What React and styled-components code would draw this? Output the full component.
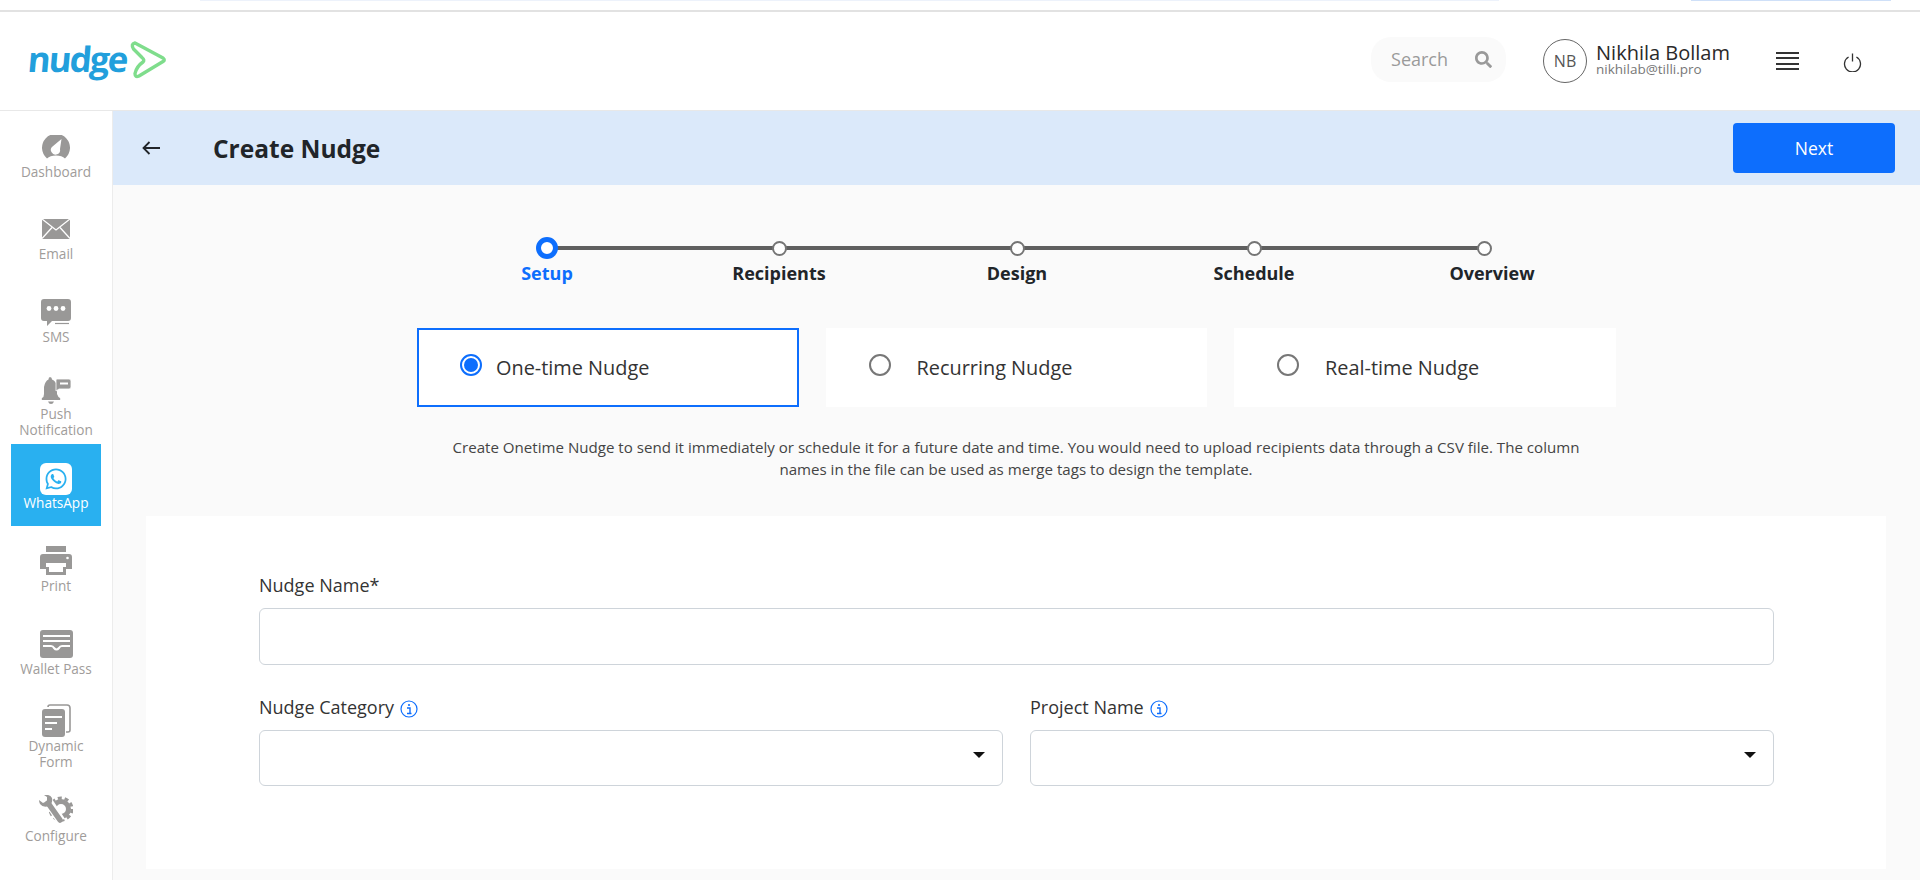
import React from 'react';
import styled, { createGlobalStyle } from 'styled-components';
import { FaSearch, FaWhatsapp } from 'react-icons/fa';

const GlobalStyle = createGlobalStyle`
    html, body {
        margin: 0;
        padding: 0;
        background: #fff;
        font-family: "Open Sans", "Noto Sans", sans-serif;
        overflow: hidden;
    }
    * {
        box-sizing: border-box;
    }
`;

const Page = styled.div`
    width: 1920px;
    height: 880px;
    overflow: hidden;
    display: flex;
    flex-direction: column;
`;

const TopStrip = styled.div`
    height: 12px;
    flex: none;
    display: flex;
    align-items: flex-start;
    padding-left: 200px;
    border-bottom: 2px solid #e2e2e2;
`;

const StripBar = styled.div`
    height: 1px;
    width: ${(p) => p.$width}px;
    margin-right: ${(p) => p.$gap || 0}px;
    background: ${(p) => p.$color};
`;

const Header = styled.header`
    height: 99px;
    flex: none;
    display: flex;
    align-items: center;
    padding-left: 28px;
    border-bottom: 1px solid #e8e8e8;
`;

const Logo = styled.div`
    display: flex;
    align-items: center;
    margin-top: -2px;
`;

const LogoText = styled.span`
    display: inline-block;
    font-family: "Open Sans", sans-serif;
    font-size: 35px;
    font-weight: 700;
    line-height: 1;
    letter-spacing: -2px;
    color: #229fdc;
    transform: skewX(-5deg);
    margin: -4px 2px 0 0;
`;

const SearchPill = styled.div`
    width: 135px;
    height: 45px;
    margin-left: auto;
    margin-top: -4px;
    border-radius: 20px;
    background: #fafafa;
    display: flex;
    align-items: center;
    justify-content: space-between;
    padding: 0 14px 0 20px;
    font-size: 18px;
    color: #9a9a9a;
`;

const Avatar = styled.div`
    width: 44px;
    height: 44px;
    margin-left: 37px;
    border: 1px solid #666;
    border-radius: 50%;
    display: flex;
    align-items: center;
    justify-content: center;
    font-size: 16px;
    color: #555;
`;

const UserInfo = styled.div`
    margin-left: 9px;
    display: flex;
    flex-direction: column;
    margin-top: -4px;
`;

const UserName = styled.span`
    font-size: 20px;
    line-height: 20px;
    color: #2a2a2a;
`;

const UserMail = styled.span`
    font-size: 13.5px;
    line-height: 12px;
    color: #777;
`;

const Hamburger = styled.div`
    width: 23px;
    height: 19px;
    margin-left: 46px;
    display: flex;
    flex-direction: column;
    justify-content: space-between;
`;

const HamburgerLine = styled.span`
    height: 2px;
    background: #333;
`;

const PowerButton = styled.div`
    margin-left: 44px;
    margin-right: 58px;
    margin-top: 2px;
    display: flex;
`;

const Body = styled.div`
    flex: 1;
    display: flex;
    min-height: 0;
`;

const Sidebar = styled.nav`
    width: 113px;
    flex: none;
    border-right: 1px solid #ececec;
    padding: 5px 11px 0;
    display: flex;
    flex-direction: column;
`;

const SideItem = styled.div`
    height: 82px;
    flex: none;
    padding-top: ${(p) => p.$pad || 0}px;
    display: flex;
    flex-direction: column;
    align-items: center;
    justify-content: center;
    text-align: center;
    font-size: 13.6px;
    line-height: 16px;
    background: ${(p) => (p.$active ? '#29b0f0' : 'transparent')};
    color: ${(p) => (p.$active ? '#fff' : '#a09c9a')};
`;

const SideIcon = styled.div`
    display: flex;
    margin-bottom: ${(p) => p.$gap}px;
`;

const WhatsAppIcon = styled.div`
    width: 32px;
    height: 32px;
    border-radius: 6px;
    background: #fff;
    color: #29b0f0;
    display: flex;
    align-items: center;
    justify-content: center;
    font-size: 24px;
`;

const Main = styled.main`
    flex: 1;
    min-width: 0;
    background: #fafafa;
`;

const TitleBar = styled.div`
    height: 74px;
    background: #dbe9fa;
    display: flex;
    align-items: center;
    padding: 0 25px 0 29px;
`;

const BackArrow = styled.div`
    display: flex;
    width: 71px;
`;

const Title = styled.h1`
    margin: 0;
    font-size: 24.5px;
    font-weight: 700;
    color: #212529;
`;

const NextButton = styled.button`
    margin-left: auto;
    width: 162px;
    height: 50px;
    border: none;
    border-radius: 4px;
    background: #0d6efd;
    color: #fff;
    font-family: inherit;
    font-size: 17.5px;
`;

const Stepper = styled.div`
    position: relative;
    display: flex;
    margin: 52px 0 0 374px;
    width: 1057px;

    &::before {
        content: '';
        position: absolute;
        top: 9px;
        left: 60px;
        right: 60px;
        height: 4px;
        background: #5f5f5f;
    }
`;

const Step = styled.div`
    position: relative;
    width: 120px;
    flex: none;
    margin-left: ${(p) => p.$gap || 0}px;
    display: flex;
    flex-direction: column;
    align-items: center;
`;

const StepDotSlot = styled.div`
    height: 22px;
    display: flex;
    align-items: center;
    justify-content: center;
`;

const StepDot = styled.span`
    width: ${(p) => (p.$active ? 22 : 15)}px;
    height: ${(p) => (p.$active ? 22 : 15)}px;
    border-radius: 50%;
    background: #fff;
    border: ${(p) => (p.$active ? '5px solid #0d6efd' : '2px solid #757575')};
`;

const StepLabel = styled.span`
    margin-top: 2px;
    padding-left: ${(p) => p.$offset || 0}px;
    font-size: 18px;
    line-height: 24px;
    font-weight: 700;
    white-space: nowrap;
    color: ${(p) => (p.$active ? '#0d6efd' : '#212529')};
`;

const TypeRow = styled.div`
    display: flex;
    gap: 27px;
    margin: 43px 0 0 304px;
`;

const TypeCard = styled.label`
    width: 381.5px;
    height: 79px;
    background: #fff;
    border: 2px solid ${(p) => (p.$active ? '#0d6efd' : '#fff')};
    padding-left: 41px;
    display: flex;
    align-items: center;
    gap: ${(p) => p.$gap}px;
    font-size: 19.9px;
    color: #333;
`;

const Radio = styled.span`
    width: 22px;
    height: 22px;
    margin-top: -6px;
    flex: none;
    border-radius: 50%;
    display: flex;
    align-items: center;
    justify-content: center;
    border: 2px solid ${(p) => (p.$active ? '#0d6efd' : '#777')};

    &::after {
        content: '';
        display: ${(p) => (p.$active ? 'block' : 'none')};
        width: 14px;
        height: 14px;
        border-radius: 50%;
        background: #0d6efd;
    }
`;

const Description = styled.p`
    width: 1140px;
    margin: 29px 0 0 333px;
    text-align: center;
    font-size: 15.1px;
    line-height: 22px;
    color: #444;
`;

const FormCard = styled.section`
    height: 353px;
    margin: 36px 34px 0 33px;
    background: #fff;
    padding: 57px 112px 0 113px;
`;

const FieldLabel = styled.label`
    display: flex;
    align-items: center;
    gap: 6px;
    font-size: 18px;
    line-height: 24px;
    color: #333;
`;

const InfoSlot = styled.span`
    display: flex;
    margin-top: 4px;
`;

const TextInput = styled.input`
    display: block;
    width: 100%;
    height: 57px;
    margin-top: 11px;
    border: 1px solid #ced4da;
    border-radius: 6px;
    background: #fff;
`;

const SelectGrid = styled.div`
    display: grid;
    grid-template-columns: 744px 744px;
    gap: 27px;
    margin-top: 30px;
`;

const SelectBox = styled.div`
    height: 56px;
    margin-top: 11px;
    border: 1px solid #ced4da;
    border-radius: 6px;
    background: #fff;
    display: flex;
    justify-content: flex-end;
    padding: 21px 17px 0 0;
`;

const Caret = styled.span`
    width: 0;
    height: 0;
    border-left: 6px solid transparent;
    border-right: 6px solid transparent;
    border-top: 6px solid #111;
`;

const GRAY = '#999897';

const DashboardGlyph = () => (
    <svg width="28" height="24" viewBox="0 0 28 24">
        <path d="M5 23.5 A14 14 0 1 1 23 23.5 Q20 20.5 14 20.5 Q8 20.5 5 23.5 Z" fill={GRAY} />
        <path d="M19.5 4 L18 14 A4.6 4.6 0 1 1 10.5 11.5 Z" fill="#fff" />
    </svg>
);

const MailGlyph = () => (
    <svg width="28" height="20" viewBox="0 0 28 20">
        <rect width="28" height="20" fill={GRAY} />
        <path d="M0 0 L14 11 L28 0" stroke="#fff" strokeWidth="1.3" fill="none" />
        <path d="M0 19.5 L10 8.5 M28 19.5 L18 8.5" stroke="#fff" strokeWidth="1.3" fill="none" />
    </svg>
);

const SmsGlyph = () => (
    <svg width="30" height="27" viewBox="0 0 30 27">
        <path d="M3 0 H27 Q30 0 30 3 V19 Q30 22 27 22 H11 L6 27 V22 H3 Q0 22 0 19 V3 Q0 0 3 0 Z" fill={GRAY} />
        <circle cx="8" cy="9.5" r="2.4" fill="#fff" />
        <circle cx="15" cy="9.5" r="2.4" fill="#fff" />
        <circle cx="22" cy="9.5" r="2.4" fill="#fff" />
        <path d="M14 24.5 H28" stroke={GRAY} strokeWidth="1.2" />
    </svg>
);

const PushGlyph = () => (
    <svg width="30" height="27" viewBox="0 0 30 27">
        <path d="M9 0 Q11 0 11 2.5 Q15 4 16 9 V17 Q17 20 19 21 Q20 23 18 23 H2 Q0 23 1 21 Q3 20 3 17 V10 Q4 4 7.5 2.5 Q7.5 0 9 0 Z" fill={GRAY} />
        <path d="M7 24.5 H13 Q12 27 10 27 Q8 27 7 24.5 Z" fill={GRAY} />
        <path d="M16 2 H28 Q30 2 30 4 V10 Q30 12 28 12 H18 L15 14 V3 Q15 2 16 2 Z" fill={GRAY} stroke="#fff" strokeWidth="0.8" />
        <path d="M19 6.5 H27" stroke="#fff" strokeWidth="2" />
    </svg>
);

const PrintGlyph = () => (
    <svg width="32" height="29" viewBox="0 0 32 29">
        <rect x="6" y="0" width="20" height="6" fill={GRAY} />
        <path d="M3 8 H29 Q32 8 32 11 V23 H26 V17 H6 V23 H0 V11 Q0 8 3 8 Z" fill={GRAY} />
        <circle cx="27.5" cy="12" r="1.3" fill="#fff" />
        <path d="M6 21 V29 H26 V21 H23 V25 H9 V21 Z" fill={GRAY} />
        <rect x="9" y="19" width="14" height="7" fill="#fff" />
    </svg>
);

const WalletGlyph = () => (
    <svg width="33" height="28" viewBox="0 0 33 28">
        <rect width="33" height="28" rx="3" fill={GRAY} />
        <path d="M3 6 H30 M3 11 H30" stroke="#fff" strokeWidth="2" />
        <path d="M3 16 H11 Q13 16 14 18 Q16.5 21 19 18 Q20 16 22 16 H30" stroke="#fff" strokeWidth="2" fill="none" />
    </svg>
);

const FormGlyph = () => (
    <svg width="29" height="33" viewBox="0 0 29 33">
        <path d="M6 3 Q6 1 8 1 H25 Q28 1 28 4 V26 Q28 28 26 28 H24" stroke={GRAY} strokeWidth="1.6" fill="none" />
        <rect x="0" y="5" width="23" height="28" rx="3" fill={GRAY} />
        <path d="M3 13 H20 M3 19 H15 M3 25 H10" stroke="#fff" strokeWidth="2" />
    </svg>
);

const ConfigureGlyph = () => (
    <svg width="34" height="29" viewBox="0 0 34 29">
        <circle cx="22" cy="14" r="7.5" stroke={GRAY} strokeWidth="5" fill="none" />
        <circle cx="22" cy="14" r="11" stroke={GRAY} strokeWidth="3" strokeDasharray="4 2.9" fill="none" />
        <path d="M9 6 L22 26" stroke="#fff" strokeWidth="9" />
        <path d="M9 8 L21 25" stroke={GRAY} strokeWidth="5.5" strokeLinecap="round" />
        <path d="M0 5 L4 8 L8 6 L8 2 L5 0 Q11 -1 13 3 Q14 8 10 11 Q4 13 1 9 Q0 7 0 5 Z" fill={GRAY} />
    </svg>
);

const LogoMark = () => (
    <svg width="38" height="40" viewBox="0 0 38 40">
        <path
            d="M6 3 L34 18 Q36.5 20 34 21.5 L10 36 Q6 38 6 33.5 Q7.5 26.5 14 22 Q16 20 13 17.5 L4.5 9 Q1.5 4 6 3 Z"
            stroke="#7fdd8c"
            strokeWidth="3.4"
            strokeLinejoin="round"
            fill="none"
        />
    </svg>
);

const PowerGlyph = () => (
    <svg width="19" height="19" viewBox="0 0 19 19">
        <path d="M5.6 4 A8 8 0 1 0 13.4 4" stroke="#333" strokeWidth="1.3" fill="none" />
        <path d="M9.5 0.5 V8.5" stroke="#333" strokeWidth="1.3" />
    </svg>
);

const ArrowGlyph = () => (
    <svg width="18" height="14" viewBox="0 0 18 14">
        <path d="M18 7 H1.5 M7.5 1 L1.5 7 L7.5 13" stroke="#212529" strokeWidth="1.8" fill="none" />
    </svg>
);

const InfoGlyph = () => (
    <svg width="18" height="18" viewBox="0 0 18 18">
        <circle cx="9" cy="9" r="8" stroke="#0d6efd" strokeWidth="1.2" fill="#fff" />
        <circle cx="9" cy="5" r="1.1" fill="#0d6efd" />
        <path d="M7 8 H10 V13 M7 13.5 H11.5" stroke="#0d6efd" strokeWidth="1.4" fill="none" />
    </svg>
);

const navItems = [
    { label: 'Dashboard', icon: <DashboardGlyph />, gap: 5, pad: 0 },
    { label: 'Email', icon: <MailGlyph />, gap: 7, pad: 3 },
    { label: 'SMS', icon: <SmsGlyph />, gap: 3, pad: 2 },
    { label: ['Push', 'Notification'], icon: <PushGlyph />, gap: 2, pad: 9 },
    { label: 'WhatsApp', active: true, gap: 0, pad: 3 },
    { label: 'Print', icon: <PrintGlyph />, gap: 3, pad: 6 },
    { label: 'Wallet Pass', icon: <WalletGlyph />, gap: 3, pad: 9 },
    { label: ['Dynamic', 'Form'], icon: <FormGlyph />, gap: 1, pad: 12 },
    { label: 'Configure', icon: <ConfigureGlyph />, gap: 4, pad: 13 },
];

const steps = [
    { label: 'Setup', active: true },
    { label: 'Recipients', gap: 112 },
    { label: 'Design', gap: 118 },
    { label: 'Schedule', gap: 117 },
    { label: 'Overview', gap: 110, offset: 16 },
];

const nudgeTypes = [
    { label: 'One-time Nudge', active: true, gap: 14 },
    { label: 'Recurring Nudge', gap: 26 },
    { label: 'Real-time Nudge', gap: 26 },
];

const App = () => {
    return (
        <Page>
            <GlobalStyle />
            <TopStrip>
                <StripBar $width={1299} $gap={192} $color="#edf2fb" />
                <StripBar $width={200} $color="#cfe0f8" />
            </TopStrip>
            <Header>
                <Logo>
                    <LogoText>nudge</LogoText>
                    <LogoMark />
                </Logo>
                <SearchPill>
                    Search
                    <FaSearch size={17} color="#999" />
                </SearchPill>
                <Avatar>NB</Avatar>
                <UserInfo>
                    <UserName>Nikhila Bollam</UserName>
                    <UserMail>nikhilab@tilli.pro</UserMail>
                </UserInfo>
                <Hamburger>
                    <HamburgerLine />
                    <HamburgerLine />
                    <HamburgerLine />
                    <HamburgerLine />
                </Hamburger>
                <PowerButton>
                    <PowerGlyph />
                </PowerButton>
            </Header>
            <Body>
                <Sidebar>
                    {navItems.map((item) => (
                        <SideItem key={String(item.label)} $active={item.active} $pad={item.pad}>
                            <SideIcon $gap={item.gap}>
                                {item.active ? (
                                    <WhatsAppIcon>
                                        <FaWhatsapp />
                                    </WhatsAppIcon>
                                ) : (
                                    item.icon
                                )}
                            </SideIcon>
                            {[].concat(item.label).map((line) => (
                                <span key={line}>{line}</span>
                            ))}
                        </SideItem>
                    ))}
                </Sidebar>
                <Main>
                    <TitleBar>
                        <BackArrow>
                            <ArrowGlyph />
                        </BackArrow>
                        <Title>Create Nudge</Title>
                        <NextButton>Next</NextButton>
                    </TitleBar>
                    <Stepper>
                        {steps.map((step) => (
                            <Step key={step.label} $gap={step.gap}>
                                <StepDotSlot>
                                    <StepDot $active={step.active} />
                                </StepDotSlot>
                                <StepLabel $active={step.active} $offset={step.offset}>
                                    {step.label}
                                </StepLabel>
                            </Step>
                        ))}
                    </Stepper>
                    <TypeRow>
                        {nudgeTypes.map((type) => (
                            <TypeCard key={type.label} $active={type.active} $gap={type.gap}>
                                <Radio $active={type.active} />
                                {type.label}
                            </TypeCard>
                        ))}
                    </TypeRow>
                    <Description>
                        Create Onetime Nudge to send it immediately or schedule it for a future date and time. You
                        would need to upload recipients data through a CSV file. The column names in the file can be
                        used as merge tags to design the template.
                    </Description>
                    <FormCard>
                        <FieldLabel>Nudge Name*</FieldLabel>
                        <TextInput />
                        <SelectGrid>
                            <div>
                                <FieldLabel>
                                    Nudge Category
                                    <InfoSlot>
                                        <InfoGlyph />
                                    </InfoSlot>
                                </FieldLabel>
                                <SelectBox>
                                    <Caret />
                                </SelectBox>
                            </div>
                            <div>
                                <FieldLabel>
                                    Project Name
                                    <InfoSlot>
                                        <InfoGlyph />
                                    </InfoSlot>
                                </FieldLabel>
                                <SelectBox>
                                    <Caret />
                                </SelectBox>
                            </div>
                        </SelectGrid>
                    </FormCard>
                </Main>
            </Body>
        </Page>
    );
};

export default App;
